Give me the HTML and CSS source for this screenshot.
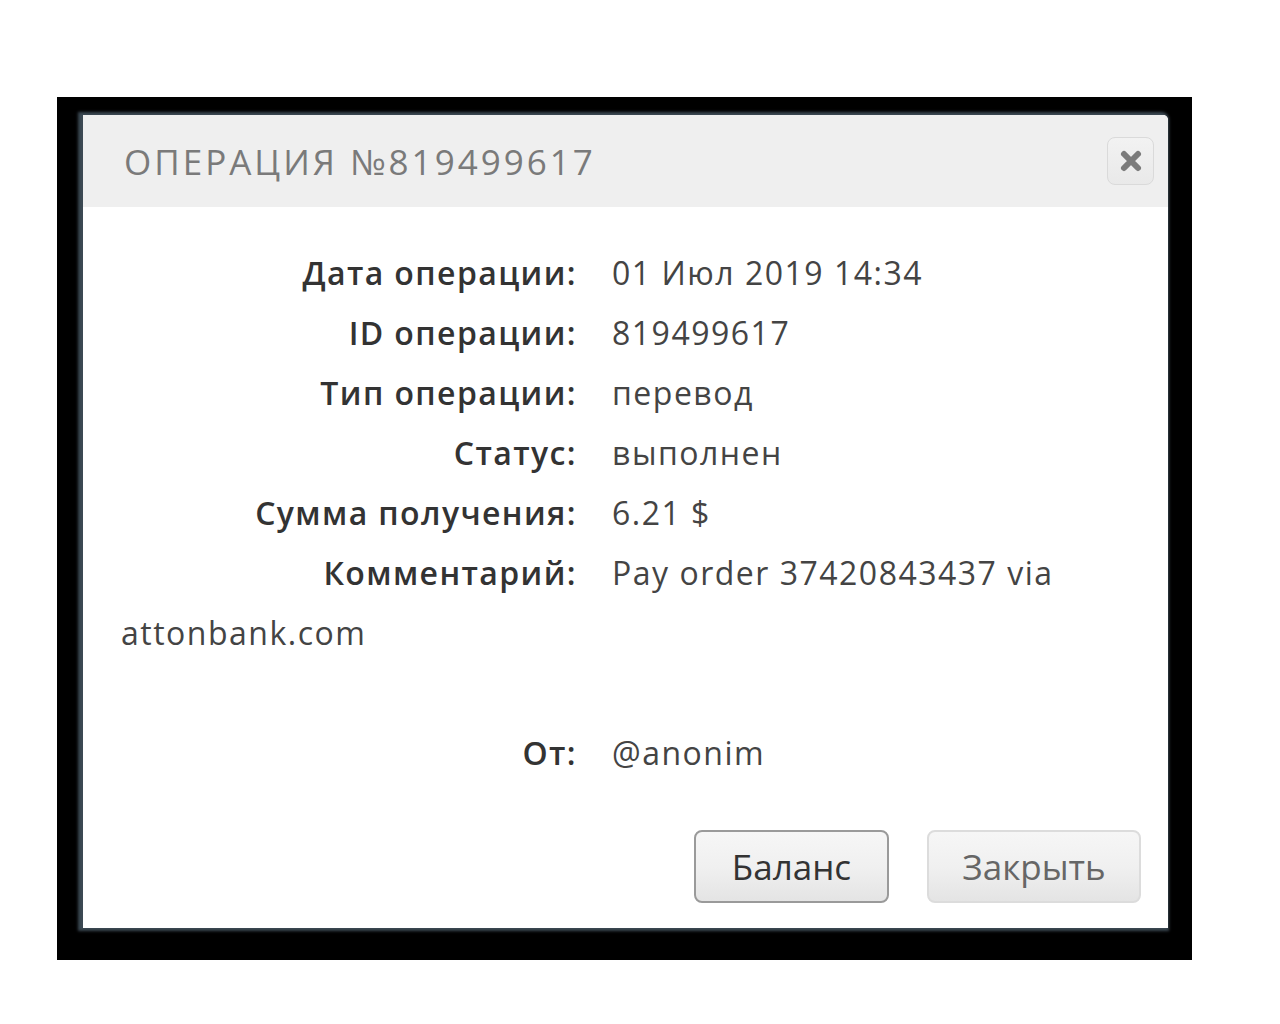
FILE: index.html
```html
<!DOCTYPE html>
<html lang="ru">
<head>
    <meta charset="UTF-8">
    <meta name="viewport" content="width=device-width, initial-scale=1.0">
    <title>Операция №819499617</title>
    <link rel="stylesheet" href="styles.css">
</head>
<body>

    <div class="frame">
        <div class="modal">
            <div class="modal-header">
                <h2 class="modal-title">Операция №819499617</h2>
                <button class="close-btn" type="button" aria-label="Закрыть">
                    <svg width="26" height="26" viewBox="0 0 26 26">
                        <path d="M6 6 L20 20 M20 6 L6 20" stroke="#7b7b7b" stroke-width="6" stroke-linecap="round"/>
                    </svg>
                </button>
            </div>

            <div class="modal-body">
                <div class="row"><span class="label">Дата операции:</span><span class="value">01 Июл 2019 14:34</span></div>
                <div class="row"><span class="label">ID операции:</span><span class="value">819499617</span></div>
                <div class="row"><span class="label">Тип операции:</span><span class="value">перевод</span></div>
                <div class="row"><span class="label">Статус:</span><span class="value">выполнен</span></div>
                <div class="row"><span class="label">Сумма получения:</span><span class="value">6.21 $</span></div>
                <div class="row"><span class="label">Комментарий:</span><span class="value">Pay order 37420843437 via attonbank.com</span></div>
                <div class="row empty"></div>
                <div class="row"><span class="label">От:</span><span class="value">@anonim</span></div>
            </div>

            <div class="modal-footer">
                <button class="btn btn-main" type="button">Баланс</button>
                <button class="btn btn-close" type="button">Закрыть</button>
            </div>
        </div>
    </div>

</body>
</html>
```

FILE: styles.css
```css
body {
    margin: 0;
    padding: 0;
    background-color: #fff;
    font-family: "Open Sans", "Lato", sans-serif;
}

.frame {
    width: 1135px;
    margin: 97px 0 0 57px;
    padding: 18px 24px 32px 26px;
    box-sizing: border-box;
    background-color: #000;
}

.modal {
    background-color: #fff;
    border-radius: 0 5px 0 0;
    box-shadow: -2px 0 3px 3px #3c4953;
}

.modal-header {
    height: 92px;
    display: flex;
    align-items: center;
    justify-content: space-between;
    padding: 0 14px 0 41px;
    background-color: #efefef;
    border-radius: 0 5px 0 0;
}

.modal-title {
    margin: 0;
    font-size: 35px;
    font-weight: 400;
    letter-spacing: 3px;
    text-transform: uppercase;
    color: #7a7a7a;
}

.close-btn {
    width: 47px;
    height: 48px;
    display: flex;
    align-items: center;
    justify-content: center;
    padding: 0;
    border: 1px solid #dadada;
    border-radius: 8px;
    background: linear-gradient(#f2f2f2, #e9e9e9);
}

.modal-body {
    padding: 36px 38px 0 38px;
    font-size: 32px;
    line-height: 60px;
    letter-spacing: 1.5px;
    color: #444;
}

.row.empty {
    height: 60px;
}

.label {
    display: inline-block;
    width: 456px;
    margin-right: 35px;
    text-align: right;
    font-weight: 600;
    letter-spacing: 1.4px;
    color: #333;
}

.modal-footer {
    display: flex;
    justify-content: flex-end;
    gap: 38px;
    padding: 47px 27px 25px 0;
}

.btn {
    height: 73px;
    padding: 0;
    font-family: "Open Sans", sans-serif;
    font-size: 35px;
    color: #666;
    border: 2px solid #dcdcdc;
    border-radius: 8px;
    background: linear-gradient(#f6f6f6, #f0f0f0 50%, #e4e4e4);
}

.btn-main {
    width: 195px;
    color: #333;
    border-color: #9a9a9a;
}

.btn-close {
    width: 214px;
}
```
